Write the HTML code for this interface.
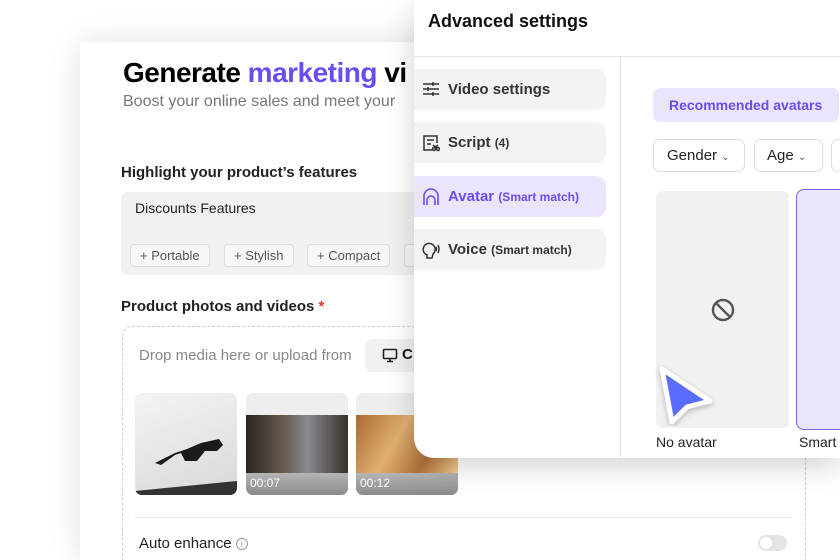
<!DOCTYPE html>
<html style="width:840px;height:560px;overflow:hidden"><head><style>
*{box-sizing:border-box;margin:0;padding:0}
body{width:840px;height:560px;overflow:hidden;background:#fff;font-family:"Liberation Sans",sans-serif;position:relative;color:#1a1a1a}
.card{position:absolute;left:80px;top:42px;width:760px;height:518px;background:#fff;box-shadow:0 0 30px rgba(0,0,0,.12)}
.abs{position:absolute}
.chip{position:absolute;top:244px;height:23px;border:1px solid #dcdcdc;border-radius:4px;background:#f7f7f7;font-size:13px;color:#555;line-height:21px;padding:0 9px}
.modal{position:absolute;left:414px;top:0;width:426px;height:458px;background:#fff;border-radius:0 0 0 20px;box-shadow:0 8px 30px rgba(0,0,0,.18);overflow:hidden}
.nav{position:absolute;left:0;width:192px;height:41px;background:#f3f3f3;border-radius:0 10px 10px 0;font-size:15px;font-weight:bold;color:#333;line-height:41px;padding-left:34px}
.nav small{font-size:12px}
.nav svg{position:absolute;left:8px;top:12px}
.thumb{position:absolute;top:393px;width:102px;height:102px;border-radius:7px;overflow:hidden;background:#eee}
.tt{position:absolute;left:4px;bottom:5px;color:#fff;font-size:12px}
</style></head><body>
<div class="card"></div>
<div class="abs" style="left:123px;top:57px;font-size:28px;font-weight:bold;letter-spacing:-0.5px;color:#000">Generate <span style="color:#6a4cf0">marketing</span> vi</div>
<div class="abs" style="left:123px;top:93px;font-size:16px;color:#777">Boost your online sales and meet your</div>
<div class="abs" style="left:121px;top:164px;font-size:15px;font-weight:bold;color:#222">Highlight your product’s features</div>
<div class="abs" style="left:121px;top:192px;width:320px;height:83px;background:#f1f1f1;border-radius:7px"></div>
<div class="abs" style="left:135px;top:200px;font-size:14px;color:#222">Discounts Features</div>
<div class="chip" style="left:130px">+ Portable</div>
<div class="chip" style="left:224px">+ Stylish</div>
<div class="chip" style="left:307px">+ Compact</div>
<div class="chip" style="left:404px;width:20px"></div>
<div class="abs" style="left:121px;top:298px;font-size:15px;font-weight:bold;color:#222">Product photos and videos <span style="color:#e33">*</span></div>
<div class="abs" style="left:122px;top:326px;width:684px;height:234px;border:1px dashed #ccc;border-bottom:none;border-radius:10px 10px 0 0"></div>
<div class="abs" style="left:139px;top:347px;font-size:15px;color:#888">Drop media here or upload from</div>
<div class="abs" style="left:365px;top:339px;width:49px;height:33px;background:#f1f1f1;border-radius:7px 0 0 7px"></div>
<svg class="abs" style="left:382px;top:348px" width="16" height="15" viewBox="0 0 16 15"><rect x="1.5" y="1.5" width="13" height="9" rx="1" fill="none" stroke="#222" stroke-width="1.6"/><path d="M5 13.5h6M8 10.5v3" stroke="#222" stroke-width="1.6"/></svg>
<div class="abs" style="left:402px;top:346px;font-size:15px;font-weight:bold">C</div>
<div class="thumb" style="left:135px;background:linear-gradient(160deg,#f4f4f4,#d8d8d8)">
<svg width="102" height="102"><path d="M20 70 L40 60 L52 56 L66 50 L84 46 L88 52 L82 58 L70 58 L62 68 L50 68 L46 60 L40 62 L26 72 Z" fill="#1a1a1a"/><path d="M0 98 L102 88 L102 102 L0 102Z" fill="#333"/></svg></div>
<div class="thumb" style="left:246px"><div style="position:absolute;top:22px;width:102px;height:58px;background:linear-gradient(90deg,#2a2520,#6b6055 40%,#8a8a92 60%,#3a3028)"></div><div style="position:absolute;top:80px;width:102px;height:22px;background:linear-gradient(#b5b5b5,#8a8a8a)"></div><span class="tt">00:07</span></div>
<div class="thumb" style="left:356px"><div style="position:absolute;top:22px;width:102px;height:58px;background:linear-gradient(120deg,#a86a30,#e0b070 40%,#b07038 70%,#f0d090)"></div><div style="position:absolute;top:80px;width:102px;height:22px;background:linear-gradient(#b5b5b5,#8a8a8a)"></div><span class="tt">00:12</span></div>
<div class="abs" style="left:135px;top:517px;width:657px;height:1px;background:#e6e6e6"></div>
<div class="abs" style="left:139px;top:535px;font-size:15px;color:#222">Auto enhance <span style="display:inline-block;width:12px;height:12px;border:1px solid #999;border-radius:50%;font-size:9px;color:#999;text-align:center;line-height:10px;vertical-align:1px">i</span></div>
<div class="abs" style="left:758px;top:535px;width:29px;height:16px;border-radius:8px;background:#e4e4e4"><div style="position:absolute;left:2px;top:2px;width:12px;height:12px;border-radius:50%;background:#fff"></div></div>

<div class="modal">
<div class="abs" style="left:14px;top:11px;font-size:18px;font-weight:bold;color:#111">Advanced settings</div>
<div class="abs" style="left:0;top:56px;width:426px;height:1px;background:#e5e5e5"></div>
<div class="abs" style="left:206px;top:57px;width:1px;height:401px;background:#e5e5e5"></div>
<div class="nav" style="top:69px"><svg width="18" height="16" viewBox="0 0 18 16" fill="none" stroke="#333" stroke-width="1.5"><path d="M1 3h16M1 8h16M1 13h16"/><path d="M11 1v4M6 6v4M11 11v4"/></svg>Video settings</div>
<div class="nav" style="top:122px"><svg width="18" height="18" viewBox="0 0 18 18" fill="none" stroke="#333" stroke-width="1.5"><path d="M10 16H2V2h13v7M5 6h7M5 10h4"/><circle cx="12" cy="15" r="1.5"/><circle cx="16" cy="15" r="1.5"/><path d="M11 11l4 3M16 11l-4 3"/></svg>Script <small>(4)</small></div>
<div class="nav" style="top:176px;background:#ece4fd;color:#6a4cf0"><svg width="18" height="18" viewBox="0 0 18 18" fill="none" stroke="#6a4cf0" stroke-width="1.6"><path d="M2 17V8a7 7 0 0 1 14 0v9"/><path d="M5 17v-5a4 4 0 0 1 8 0v5"/></svg>Avatar <small>(Smart match)</small></div>
<div class="nav" style="top:229px"><svg width="20" height="18" viewBox="0 0 20 18" fill="none" stroke="#333" stroke-width="1.5"><path d="M5 17v-3a6 6 0 1 1 6-1l-1 4z"/><path d="M14 6q1 2 0 4M16 4q2 4 0 8"/></svg>Voice <small>(Smart match)</small></div>
<div class="abs" style="left:239px;top:88px;width:186px;height:34px;background:#ece4fd;border-radius:7px;color:#6a4cf0;font-size:14px;font-weight:bold;line-height:34px;padding-left:16px">Recommended avatars</div>
<div class="abs" style="left:239px;top:139px;width:92px;height:33px;border:1px solid #ddd;border-radius:7px;font-size:15px;line-height:31px;padding-left:13px;color:#222">Gender <span style="font-size:10px;color:#555">&#8964;</span></div>
<div class="abs" style="left:340px;top:139px;width:69px;height:33px;border:1px solid #ddd;border-radius:7px;font-size:15px;line-height:31px;padding-left:12px;color:#222">Age <span style="font-size:10px;color:#555">&#8964;</span></div>
<div class="abs" style="left:417px;top:139px;width:20px;height:33px;border:1px solid #ddd;border-radius:7px 0 0 7px;border-right:none"></div>
<div class="abs" style="left:242px;top:191px;width:133px;height:237px;background:#f1f1f1;border-radius:7px"></div>
<svg class="abs" style="left:296px;top:297px" width="26" height="26" viewBox="0 0 26 26" fill="none" stroke="#555" stroke-width="2.4"><circle cx="13" cy="13" r="10"/><path d="M6 6l14 14"/></svg>
<div class="abs" style="left:382px;top:189px;width:50px;height:241px;background:#e9e5fb;border:1.5px solid #7a62e8;border-right:none;border-radius:8px 0 0 8px"></div>
<div class="abs" style="left:242px;top:434px;font-size:14px;color:#222">No avatar</div>
<div class="abs" style="left:385px;top:434px;font-size:14px;color:#222;white-space:nowrap">Smart</div>
</div>
<svg class="abs" style="left:652px;top:360px" width="66" height="66" viewBox="0 0 66 66"><path d="M10 9 L58 41 L35 47 L20 62 Z" fill="#5a6cff" stroke="#fff" stroke-width="5" stroke-linejoin="round" style="filter:drop-shadow(0 2px 3px rgba(0,0,0,.25))"/></svg>
</body></html>
